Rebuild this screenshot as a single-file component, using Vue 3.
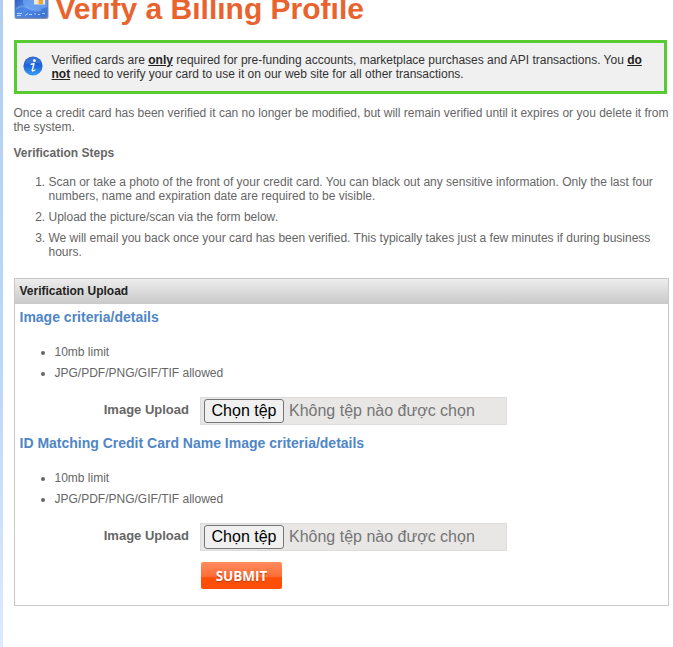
<script setup>
const steps = [
  ['Scan or take a photo of the front of your credit card. You can black out any sensitive information. Only the last four', 'numbers, name and expiration date are required to be visible.'],
  ['Upload the picture/scan via the form below.'],
  ['We will email you back once your card has been verified. This typically takes just a few minutes if during business', 'hours.']
]
const uploads = ['Image criteria/details', 'ID Matching Credit Card Name Image criteria/details']
const criteria = ['10mb limit', 'JPG/PDF/PNG/GIF/TIF allowed']
</script>

<template>
  <div class="page">
    <main class="content">
      <header class="heading">
        <svg class="card-icon" width="36" height="20" viewBox="0 0 36 20">
          <defs>
            <linearGradient id="card" x1="0" y1="0" x2="1" y2=".6">
              <stop offset="0" stop-color="#2c62c4" />
              <stop offset=".45" stop-color="#4f8ae6" />
              <stop offset="1" stop-color="#3f74d8" />
            </linearGradient>
          </defs>
          <path d="M.5 0H34.500V16.500Q34.500 19 32 19H3Q.5 19 .5 16.500Z" fill="#5b6a8c" opacity=".75" />
          <path d="M1 0H33.500V15.500Q33.500 17.700 31 17.700H3.500Q1 17.700 1 15.500Z" fill="url(#card)" />
          <path d="M9 0Q8 6 15 9Q22 12 33 7V0Z" fill="#7db5f6" opacity=".55" />
          <path d="M2 9Q8 4 14 8T27 10" fill="none" stroke="#8bbcf3" stroke-width="2" opacity=".4" />
          <path d="M20 0H31V4.500H20Z" fill="#f3e6cf" />
          <path d="M24.500 0H29V4H24.500Z" fill="#eba63a" />
          <path d="M3 13.500h5M3 15.500h4M11 15.500l3-2M15 14.500h3M20 13.500l2 1M24 14.500h2M28 13.500h3" stroke="#d7e8ff" stroke-width="1" opacity=".75" />
        </svg>
        <h1>Verify a Billing Profile</h1>
      </header>

      <section class="notice">
        <svg class="info-icon" width="20" height="20" viewBox="0 0 20 20">
          <defs>
            <linearGradient id="info" x1="0" y1="0" x2="0" y2="1">
              <stop offset="0" stop-color="#2357c4" />
              <stop offset=".5" stop-color="#1f66dc" />
              <stop offset="1" stop-color="#3aa0f4" />
            </linearGradient>
          </defs>
          <circle cx="10" cy="10" r="9.600" fill="url(#info)" />
          <path d="M2 8A8.300 8.300 0 0 1 18 7Q10 6 2 8Z" fill="#6a9ae2" opacity=".35" />
          <circle cx="11.400" cy="4.700" r="1.400" fill="#fff" />
          <path d="M8.200 8.300L11 7.800L9.200 14.200Q9.100 15.900 11.800 14" fill="none" stroke="#fff" stroke-width="1.400" stroke-linecap="round" stroke-linejoin="round" />
        </svg>
        <p>Verified cards are <b>only</b> required for pre-funding accounts, marketplace purchases and API transactions. You <b>do</b><br><b>not</b> need to verify your card to use it on our web site for all other transactions.</p>
      </section>

      <p class="intro">Once a credit card has been verified it can no longer be modified, but will remain verified until it expires or you delete it from<br>the system.</p>
      <h2>Verification Steps</h2>
      <ol>
        <li v-for="step in steps" :key="step[0]">
          <div v-for="line in step" :key="line">{{ line }}</div>
        </li>
      </ol>

      <section class="panel">
        <h3>Verification Upload</h3>
        <div v-for="title in uploads" :key="title" class="group">
          <h4>{{ title }}</h4>
          <ul>
            <li v-for="item in criteria" :key="item">{{ item }}</li>
          </ul>
          <div class="field">
            <label>Image Upload</label>
            <div class="file">
              <button type="button">Chọn tệp</button>
              <span>Không tệp nào được chọn</span>
            </div>
          </div>
        </div>
        <button class="submit" type="button">SUBMIT</button>
      </section>
    </main>
  </div>
</template>

<style>
body { margin: 0; background: #fff; overflow: hidden; }
</style>

<style scoped>
* { box-sizing: border-box; }
.page {
  height: 647px;
  overflow: hidden;
  padding-left: 11px;
  border-left: 3px solid;
  border-image: linear-gradient(#b2cff2, #bcd8f8 60%, #dcebff) 1;
  font: 12px/14px "Liberation Sans", Arial, sans-serif;
  color: #666;
  white-space: nowrap;
}
h1, h2, h3, h4, p, ul, ol { margin: 0; padding: 0; }
.content { width: 655px; }
.heading { display: flex; height: 40px; }
.card-icon { flex: none; }
h1 {
  margin: -10px 0 0 5.5px;
  font-size: 30px;
  line-height: 38px;
  color: #e8632e;
}
.notice {
  display: flex;
  width: 653px;
  height: 54px;
  padding: 10px 0 0 6px;
  border: 3px solid #57cb2f;
  background: #f0f0f0;
  color: #333;
}
.info-icon { flex: none; margin-top: 3px; }
.notice p { margin-left: 8.5px; }
.notice b { text-decoration: underline; color: #222; }
.intro { margin: 12px 0 0 -0.5px; }
h2 { margin: 12px 0 0 -0.5px; font-size: 12px; line-height: 14px; }
ol { margin-top: 15px; padding-left: 34.5px; }
ol li { margin-bottom: 7px; }
.panel {
  margin-top: 19px;
  height: 328px;
  border: 1px solid #c8c8c8;
}
h3 {
  height: 25px;
  padding-left: 4.5px;
  font-size: 12px;
  line-height: 24px;
  color: #222;
  background: linear-gradient(#ededed, #c9c9c9);
}
.group { height: 126px; }
h4 {
  padding: 5px 0 0 4.5px;
  font-size: 14px;
  line-height: 17px;
  color: #4f86c6;
}
ul { margin-top: 19px; padding-left: 39.5px; }
ul li { height: 14px; margin-bottom: 7px; }
.field { display: flex; margin-top: 17px; }
label {
  width: 174px;
  font-size: 13px;
  line-height: 25px;
  font-weight: bold;
  text-align: right;
}
.file {
  display: flex;
  align-items: center;
  width: 307px;
  height: 28px;
  margin-left: 11px;
  padding-left: 3px;
  border: 1px solid #dedcda;
  background: #e8e7e6;
  font-size: 16px;
  color: #757575;
}
.file button {
  width: 80px;
  height: 24px;
  margin-right: 5px;
  padding: 0;
  border: 1px solid #767676;
  border-radius: 3px;
  background: #f0f0f0;
  color: #000;
  font: 16px/20px "Liberation Sans", Arial, sans-serif;
}
.submit {
  display: block;
  width: 81px;
  height: 27px;
  margin: 6px 0 0 186px;
  padding: 1px 0 0;
  border: 0;
  border-radius: 2px;
  background: linear-gradient(#ff8c60, #ff6c35 55%, #ff4e08 58%, #fb4e08);
  color: #fff;
  font: bold 13.5px/26px "Open Sans", sans-serif;
  text-shadow: 0 1px 1px #b84010;
}
</style>
